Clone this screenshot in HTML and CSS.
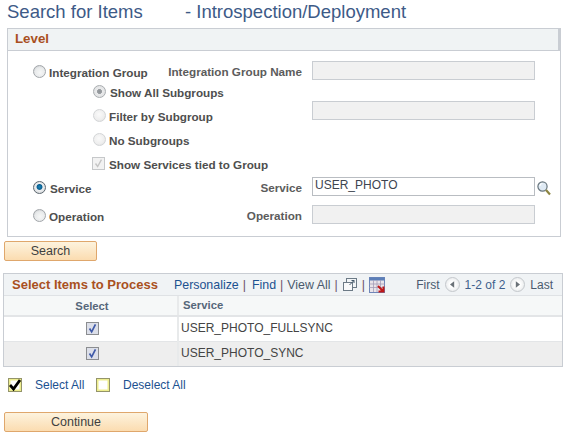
FILE: index.html
```html
<!DOCTYPE html>
<html lang="en">
<head>
<meta charset="utf-8">
<title>Search for Items</title>
<link rel="stylesheet" href="styles.css">
</head>
<body>
<h1 class="title"><span class="title-a">Search for Items</span><span>- Introspection/Deployment</span></h1>

<section class="level">
  <h2 class="level-head">Level</h2>
  <div class="level-body">
    <div class="row r1">
      <div class="choice"><span class="radio"></span><span class="lbl">Integration Group</span></div>
      <div class="name">Integration Group Name</div>
      <div class="field off"></div>
    </div>
    <div class="row r2">
      <div class="choice sub"><span class="radio off dotted"></span><span class="lbl">Show All Subgroups</span></div>
    </div>
    <div class="row r3">
      <div class="choice sub low"><span class="radio off"></span><span class="lbl">Filter by Subgroup</span></div>
      <div class="name"></div>
      <div class="field off"></div>
    </div>
    <div class="row r4">
      <div class="choice sub"><span class="radio off"></span><span class="lbl">No Subgroups</span></div>
    </div>
    <div class="row r5">
      <div class="choice sub wide">
        <span class="check off"><svg viewBox="0 0 13 13" width="11" height="11"><path d="M3 6.500 5.500 10 10 2" fill="none" stroke="#c4c4c4" stroke-width="1.600"/></svg></span>
        <span class="lbl">Show Services tied to Group</span>
      </div>
    </div>
    <div class="row r6">
      <div class="choice"><span class="radio on"></span><span class="lbl wider">Service</span></div>
      <div class="name">Service</div>
      <div class="field">USER_PHOTO</div>
      <svg class="lookup" viewBox="0 0 14 15" width="14" height="15">
        <circle cx="5.500" cy="5.500" r="4.600" fill="#dfeaf4" stroke="#66747c" stroke-width="1.200"/>
        <path d="M2.800 5A3 3 0 0 1 5.500 2.500" fill="none" stroke="#fff" stroke-width="1.200"/>
        <path d="M9 9l4 4.500" stroke="#8c8440" stroke-width="2.200"/>
      </svg>
    </div>
    <div class="row r7">
      <div class="choice"><span class="radio"></span><span class="lbl">Operation</span></div>
      <div class="name">Operation</div>
      <div class="field off"></div>
    </div>
  </div>
</section>

<button class="btn btn-search" type="button">Search</button>

<section class="grid">
  <div class="grid-head">
    <h2 class="grid-title">Select Items to Process</h2>
    <nav class="grid-links">
      <a>Personalize</a><i class="sep-first">|</i><a>Find</a><i>|</i><a class="plain">View All</a><i>|</i>
      <svg class="ic-zoom" viewBox="0 0 16 15" width="16" height="15">
        <rect x="4.500" y="1.500" width="10" height="9" fill="#f2f5f7" stroke="#6c7a86"/>
        <rect x="1.500" y="5.500" width="9" height="8" fill="#f8f9fa" stroke="#6c7a86"/>
        <path d="M7.500 8 12 3.500M9.500 3.500H12V6" fill="none" stroke="#44586a"/>
      </svg>
      <i>|</i>
      <svg class="ic-dl" viewBox="0 0 16 16" width="16" height="16">
        <rect x=".5" y=".5" width="15" height="15" fill="#e9e4ea" stroke="#6f86b8"/>
        <rect x=".5" y=".5" width="15" height="3" fill="#5c7fb8"/>
        <path d="M.5 7h15M.5 10.500h15M4.500 3v12M8 3v12M11.500 3v12" stroke="#a59db8" stroke-width=".8"/>
        <path d="M9 9l5 5M14.500 9.500v5h-5" fill="none" stroke="#c01818" stroke-width="2"/>
      </svg>
    </nav>
    <div class="pager">
      <span>First</span>
      <span class="nav"><svg viewBox="0 0 6 8" width="5" height="7"><path d="M5 0v8L0 4z" fill="#6b7278"/></svg></span>
      <span class="count">1-2 of 2</span>
      <span class="nav"><svg viewBox="0 0 6 8" width="5" height="7"><path d="M1 0v8l5-4z" fill="#6b7278"/></svg></span>
      <span>Last</span>
    </div>
  </div>
  <table class="items">
    <thead><tr><th class="c-sel">Select</th><th class="c-svc">Service</th></tr></thead>
    <tbody>
      <tr>
        <td class="c-sel"><span class="check tick"><svg viewBox="0 0 13 13" width="11" height="11"><path d="M3 6.500 5.500 10.500 10 1.500" fill="none" stroke="#3f5aa8" stroke-width="2"/></svg></span></td>
        <td>USER_PHOTO_FULLSYNC</td>
      </tr>
      <tr class="alt">
        <td class="c-sel"><span class="check tick"><svg viewBox="0 0 13 13" width="11" height="11"><path d="M3 6.500 5.500 10.500 10 1.500" fill="none" stroke="#3f5aa8" stroke-width="2"/></svg></span></td>
        <td>USER_PHOTO_SYNC</td>
      </tr>
    </tbody>
  </table>
</section>

<div class="bulk">
  <span class="bulk-box"><svg viewBox="0 0 12 12" width="12" height="12"><path d="M1 6 4.500 10 11 1" fill="none" stroke="#000" stroke-width="2.800"/></svg></span>
  <a class="bulk-a">Select All</a>
  <span class="bulk-box"></span>
  <a class="bulk-b">Deselect All</a>
</div>

<button class="btn btn-continue" type="button">Continue</button>
</body>
</html>
```
FILE: styles.css
```css
* { box-sizing: border-box; }
html, body { margin: 0; padding: 0; }
body {
  width: 567px;
  height: 436px;
  overflow: hidden;
  background: #fff;
  font-family: "Liberation Sans", Arial, sans-serif;
  font-size: 12px;
  color: #444;
}
.title {
  margin: 0;
  height: 24px;
  padding-left: 7px;
  font-size: 18.500px;
  line-height: 24px;
  font-weight: 400;
  color: #3d5a87;
  display: flex;
  white-space: nowrap;
}
.title-a { width: 178px; }

.level {
  margin: 4px 6px 0 7px;
  height: 209px;
  border: 1px solid #c9cdd3;
}
.level-head {
  margin: 0;
  height: 22px;
  padding-left: 7px;
  background: #f0f3f4;
  border-bottom: 1px solid #c9cdd3;
  border-right: 2px solid #c9cdd3;
  font-size: 13.300px;
  line-height: 20px;
  font-weight: 700;
  color: #a9501e;
}
.level-body { padding-top: 10px; }
.row { display: flex; align-items: flex-start; }
.r1 { height: 20px; }
.r2 { height: 20px; }
.r3 { height: 28px; }
.r4 { height: 24px; }
.r5 { height: 24px; }
.r6 { height: 28px; }
.r7 { height: 20px; }

.choice {
  width: 160px;
  height: 21px;
  padding-left: 25px;
  display: flex;
  align-items: center;
  flex: none;
}
.choice.sub { padding-left: 84px; }
.choice.low { margin-top: 4px; }
.choice.wide { width: 300px; }
.lbl {
  margin-left: 3px;
  padding-top: 1px;
  font-size: 11.700px;
  font-weight: 700;
  color: #4e4e4e;
  white-space: nowrap;
}
.lbl.wider { margin-left: 4px; }
.name {
  width: 134px;
  margin-right: 1px;
  flex: none;
  text-align: right;
  font-size: 11.700px;
  font-weight: 700;
  color: #5c5c5c;
  line-height: 21px;
  white-space: nowrap;
}
.field {
  width: 223px;
  height: 19px;
  margin-left: 9px;
  flex: none;
  border: 1px solid #b9bdc2;
  background: #fff;
  padding-left: 2px;
  font-size: 12px;
  line-height: 15px;
  color: #3d4450;
}
.field.off { background: #f1f1f1; border-color: #c9cdd2; }
.lookup { margin: 4px 0 0 2px; flex: none; }

.radio {
  width: 13px;
  height: 13px;
  flex: none;
  border-radius: 50%;
  border: 1px solid #a2a6aa;
  background: radial-gradient(circle at 55% 60%, #f6f7f7 0, #e8eaeb 55%, #bfc2c5 100%);
}
.sub .radio { margin-left: 1px; }
.radio.off { border-color: #d3d5d7; background: radial-gradient(circle at 45% 40%, #fafafa 0, #eeeeee 60%, #dadada 100%); }
.radio.dotted { border-color: #a9adb0; background: radial-gradient(circle, #8f9397 0, #9a9ea2 28%, #e9eaeb 36%, #dcdddf 100%); }
.radio.dotted + .lbl { margin-left: 4px; }
.radio.on { border-color: #5c6770; background: radial-gradient(circle at 50% 45%, #1d87b8 0, #0a5f92 30%, #eef0f1 42%, #c8cbce 100%); }

.check {
  width: 13px;
  height: 13px;
  flex: none;
  display: inline-flex;
  align-items: center;
  justify-content: center;
  border: 1.500px solid #8b8d90;
  background: #dcdfe9;
}
.check.off { border: 1px solid #c6c8ca; background: #f2f2f2; }
.wide .lbl { margin-left: 4px; }

.btn {
  display: block;
  height: 20px;
  padding: 0;
  margin: 0 0 0 4px;
  border: 1px solid #dfa76c;
  border-radius: 2px;
  background: linear-gradient(#fdf3de, #fbdcb0);
  font: 12.500px/18px "Liberation Sans", Arial, sans-serif;
  color: #3f3f3f;
  text-align: center;
}
.btn-search { width: 93px; margin-top: 4px; }
.btn-continue { width: 144px; margin-top: 20px; }

.grid {
  margin: 12px 4px 0 3px;
  height: 94px;
  border: 1px solid #c9cdd3;
}
.grid-head {
  height: 22px;
  display: flex;
  align-items: center;
  background: #f0f3f5;
  border-bottom: 1px solid #dfe2e5;
  white-space: nowrap;
}
.grid-title {
  margin: 0 0 0 8px;
  width: 162px;
  font-size: 13px;
  font-weight: 700;
  color: #a9501e;
}
.grid-links { display: flex; align-items: center; font-size: 12.400px; }
.grid-links i { font-style: normal; color: #6b4f6a; margin: 0 4px; }
.grid-links i.sep-first { margin-right: 6px; }
.grid-links a { color: #1c5190; }
.grid-links a.plain { color: #4a5a6e; }
.ic-zoom { flex: none; }
.ic-dl { flex: none; }
.pager {
  margin-left: auto;
  padding-right: 9px;
  display: flex;
  align-items: center;
  gap: 5px;
  color: #4a5a6e;
}
.pager .count { color: #3f5f8c; }
.nav {
  width: 15px;
  height: 15px;
  border-radius: 50%;
  border: 1px solid #c4c8cc;
  background: radial-gradient(circle, #fff 30%, #dfe2e4 100%);
  display: flex;
  align-items: center;
  justify-content: center;
}

.items { width: 100%; border-collapse: collapse; table-layout: fixed; }
.items th {
  height: 20px;
  padding: 0 4px 1px;
  background: #f6f8f8;
  border-bottom: 2px solid #e3e5e7;
  font-size: 11.300px;
  font-weight: 700;
  color: #56677a;
  text-align: left;
}
.items th + th, .items td + td { border-left: 2px solid #e8eaeb; }
.items th.c-sel { text-align: center; }
.items td {
  height: 25px;
  padding: 0 2px 1px;
  border-bottom: 1px solid #e3e5e7;
  color: #444;
}
.items .c-sel { width: 174px; text-align: center; padding: 0 0 0 3px; }
.items td.c-sel { padding-bottom: 2px; }
.items .check { vertical-align: middle; }
.items tr.alt td { background: #eeeeee; border-bottom: 0; padding-bottom: 2px; }

.bulk {
  height: 14px;
  margin: 11px 0 0 8px;
  display: flex;
  align-items: center;
}
.bulk-box {
  width: 14px;
  height: 14px;
  flex: none;
  display: flex;
  align-items: center;
  justify-content: center;
  background: #fff;
  border: 1px solid #94946a;
  box-shadow: inset 0 0 0 1.500px #eeee8e;
}
.bulk a { color: #1c5190; }
.bulk-a { margin: 0 10px 0 13px; width: 51px; }
.bulk-b { margin-left: 13px; }
```
